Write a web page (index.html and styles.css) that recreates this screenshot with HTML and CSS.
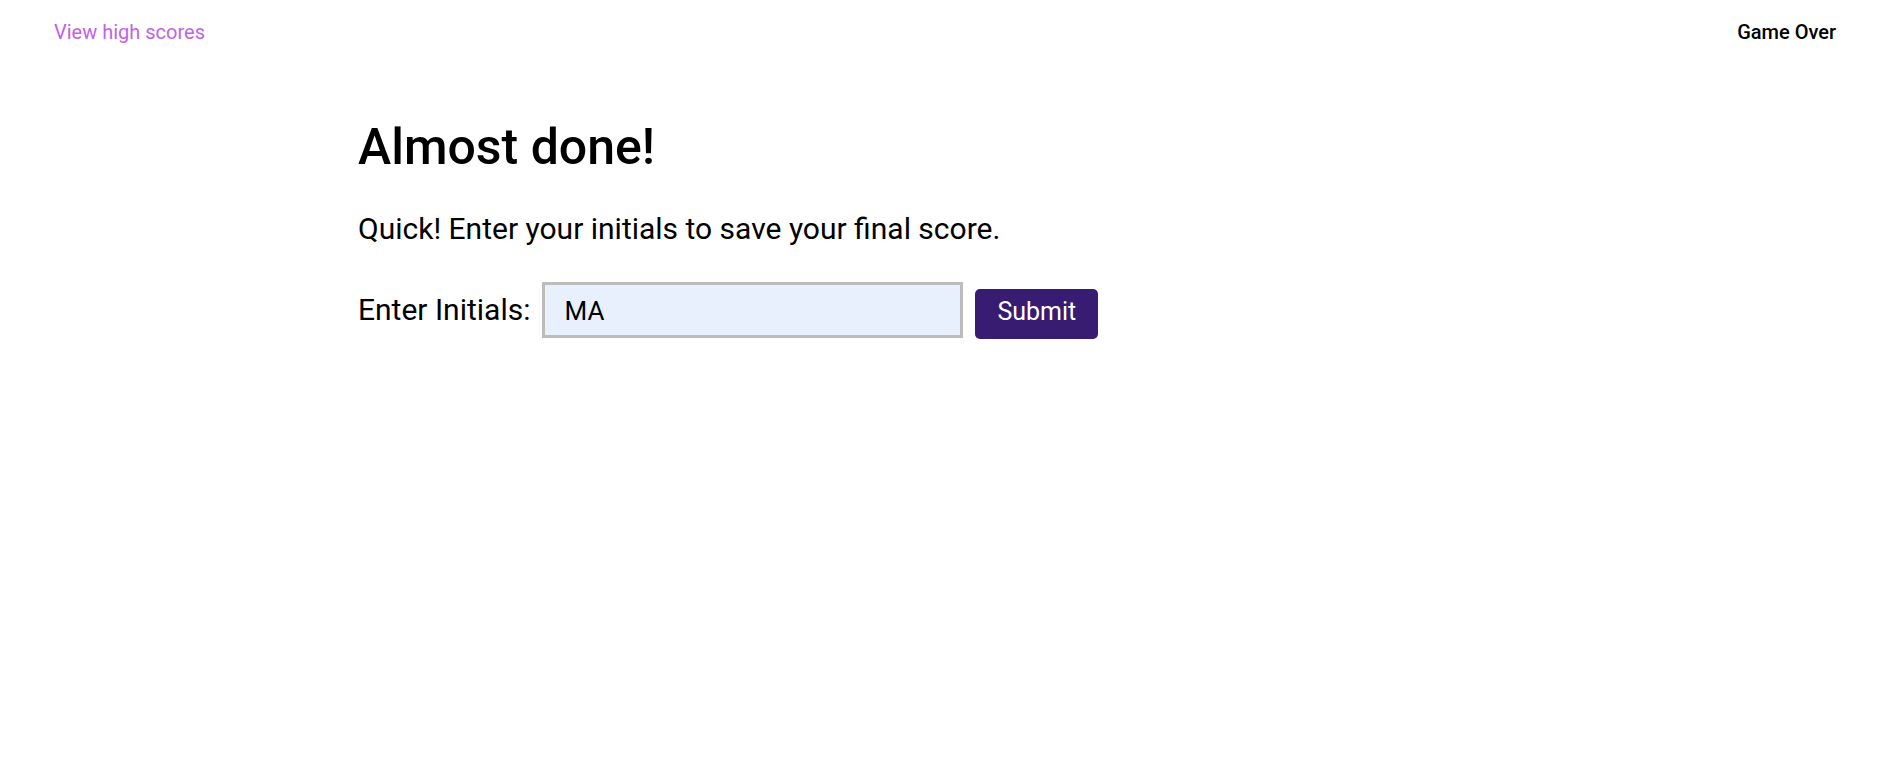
FILE: index.html
```html
<!DOCTYPE html>
<html lang="en">
<head>
<meta charset="utf-8">
<title>Game Over</title>
<link rel="stylesheet" href="styles.css">
</head>
<body>
<header class="topbar">
  <a class="scores-link" href="#">View high scores</a>
  <div class="status">Game Over</div>
</header>
<main class="content">
  <h1 class="title">Almost done!</h1>
  <p class="lead">Quick! Enter your initials to save your final score.</p>
  <form class="entry">
    <label class="entry-label" for="initials">Enter Initials:</label>
    <input class="entry-input" id="initials" type="text" value="MA">
    <button class="entry-button" type="button">Submit</button>
  </form>
</main>
</body>
</html>
```

FILE: styles.css
```css
html, body {
  margin: 0;
  padding: 0;
  background: #ffffff;
}

body {
  font-family: Roboto, "Liberation Sans", sans-serif;
  color: #000000;
  width: 1882px;
  height: 761px;
  overflow: hidden;
}

.topbar {
  display: flex;
  justify-content: space-between;
  align-items: baseline;
  padding: 20px 46px 0 54px;
}

.scores-link {
  font-size: 20px;
  color: #c362e6;
  text-decoration: none;
}

.status {
  font-size: 20px;
  font-weight: 500;
}

.content {
  margin-left: 358px;
  padding-top: 73px;
  display: flex;
  flex-direction: column;
  align-items: flex-start;
}

.title {
  margin: 0;
  font-size: 50px;
  font-weight: 500;
  line-height: 1.2;
}

.lead {
  margin: 34px 0 0 0;
  font-size: 30px;
  line-height: normal;
}

.entry {
  margin-top: 36px;
  display: flex;
  align-items: baseline;
  gap: 12px;
}

.entry-label {
  font-size: 30px;
  line-height: normal;
}

.entry-input {
  box-sizing: border-box;
  width: 421px;
  height: 56px;
  border: 3px solid #bcbcbc;
  background: #e8f0fe;
  padding: 11px 18px 9px 19px;
  font-family: Roboto, "Liberation Sans", sans-serif;
  font-size: 26px;
  color: #000000;
  outline: none;
}

.entry-button {
  box-sizing: border-box;
  height: 50px;
  padding: 8px 22px 13px 22px;
  border: none;
  border-radius: 5px;
  background: #371c72;
  color: #ffffff;
  font-family: Roboto, "Liberation Sans", sans-serif;
  font-size: 25px;
  line-height: normal;
  cursor: pointer;
}
```
